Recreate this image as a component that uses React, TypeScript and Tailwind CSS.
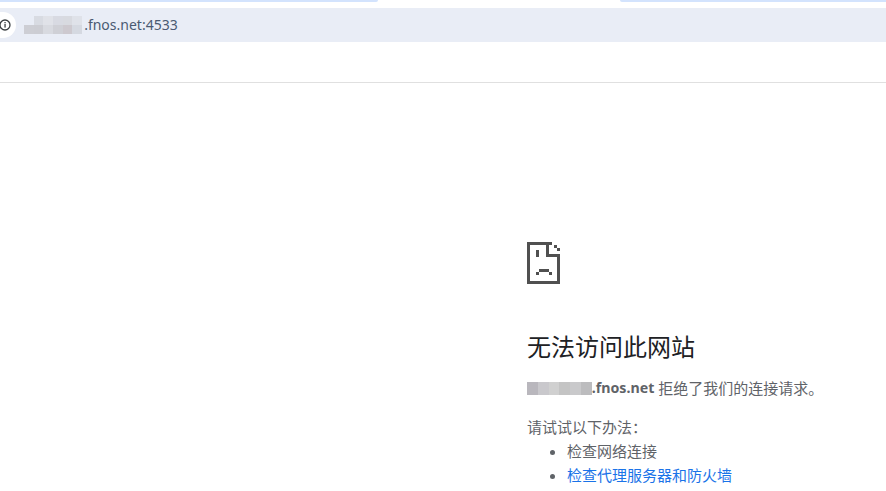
const cjk = "font-['Segoe_UI','Noto_Sans','Noto_Sans_CJK_SC',sans-serif]";

function Mosaic({ rows, cell, height }: { rows: string[][]; cell: number; height: number }) {
  return (
    <div className="flex flex-col shrink-0 relative z-10" style={{ height }}>
      {rows.map((row, i) => (
        <div key={i} className="flex flex-1">
          {row.map((c, j) => (
            <div key={j} style={{ width: cell, backgroundColor: c }} />
          ))}
        </div>
      ))}
    </div>
  );
}

function SadPage() {
  const px: [number, number, number, number][] = [
    [0, 0, 25, 3], [0, 0, 3, 42], [0, 39, 33, 3], [30, 12, 3, 30],
    [27, 3, 3, 3], [30, 6, 3, 3],
    [19, 0, 3, 15], [19, 12, 14, 3],
    [9, 8, 3, 7], [9, 30, 3, 3], [12, 27, 10, 3], [22, 30, 3, 3],
  ];
  return (
    <svg width="33" height="42" viewBox="0 0 33 42" className="block" shapeRendering="crispEdges">
      {px.map(([x, y, w, h], i) => (
        <rect key={i} x={x} y={y} width={w} height={h} fill="#505050" />
      ))}
    </svg>
  );
}

export default function App() {
  return (
    <div className={`w-[886px] h-[491px] overflow-hidden bg-white ${cjk}`}>
      <div className="h-2 bg-white flex">
        <div className="w-[378px] h-0.5 bg-[#d3e3fd] rounded-br-md" />
        <div className="w-[242px] h-0.5" />
        <div className="flex-1 h-0.5 bg-[#d3e3fd] rounded-bl-md" />
      </div>
      <div className="h-[34px] bg-[#e9edf6] flex items-center">
        <div className="w-4 h-[26px] bg-white rounded-r-full flex items-center justify-end shrink-0 overflow-hidden">
          <svg width="12" height="12" viewBox="0 0 12 12" className="mr-[5px] shrink-0">
            <circle cx="6" cy="6" r="5" fill="none" stroke="#3c4043" strokeWidth="1.3" />
            <rect x="5.4" y="5" width="1.3" height="3.6" fill="#3c4043" />
            <rect x="5.4" y="3" width="1.3" height="1.3" fill="#3c4043" />
          </svg>
        </div>
        <div className="ml-2 flex items-center">
          <Mosaic
            cell={9.7}
            height={18}
            rows={[
              ["#e9edf6", "#d8dbe2", "#e0e2e8", "#d8dae2", "#d8dae0", "#dfe2e9"],
              ["#cdced4", "#cccdd3", "#d8dae0", "#cfd0d6", "#cdc9cf", "#d5d9e1"],
            ]}
          />
          <span className="text-[14px] leading-none text-[#4a5a72] -ml-[6px]">1.fnos.net:4533</span>
        </div>
      </div>
      <div className="h-[41px] bg-white border-b border-[#e0e0e0]" />
      <div className="pl-[527px] pt-[159px] text-[#5f6368]">
        <SadPage />
        <h1 className="mt-[47px] text-2xl leading-[32px] text-[#202124] whitespace-nowrap">无法访问此网站</h1>
        <p className="mt-[15px] text-[15px] leading-5 whitespace-nowrap flex items-center">
          <Mosaic
            cell={10.8}
            height={13}
            rows={[["#b9b7bd", "#c9c8cc", "#d0d0d0", "#c4c4c4", "#c9c9cb", "#bcbcbe"]]}
          />
          <strong className="font-bold text-[14.2px]">.fnos.net</strong>
          <span className="ml-1">拒绝了我们的连接请求。</span>
        </p>
        <p className="mt-[19px] text-[15px] leading-5">请试试以下办法：</p>
        <ul className="list-disc pl-10 text-[15px] leading-6 mt-[2px] whitespace-nowrap">
          <li>检查网络连接</li>
          <li><span className="text-[#1a73e8]">检查代理服务器和防火墙</span></li>
        </ul>
      </div>
    </div>
  );
}
